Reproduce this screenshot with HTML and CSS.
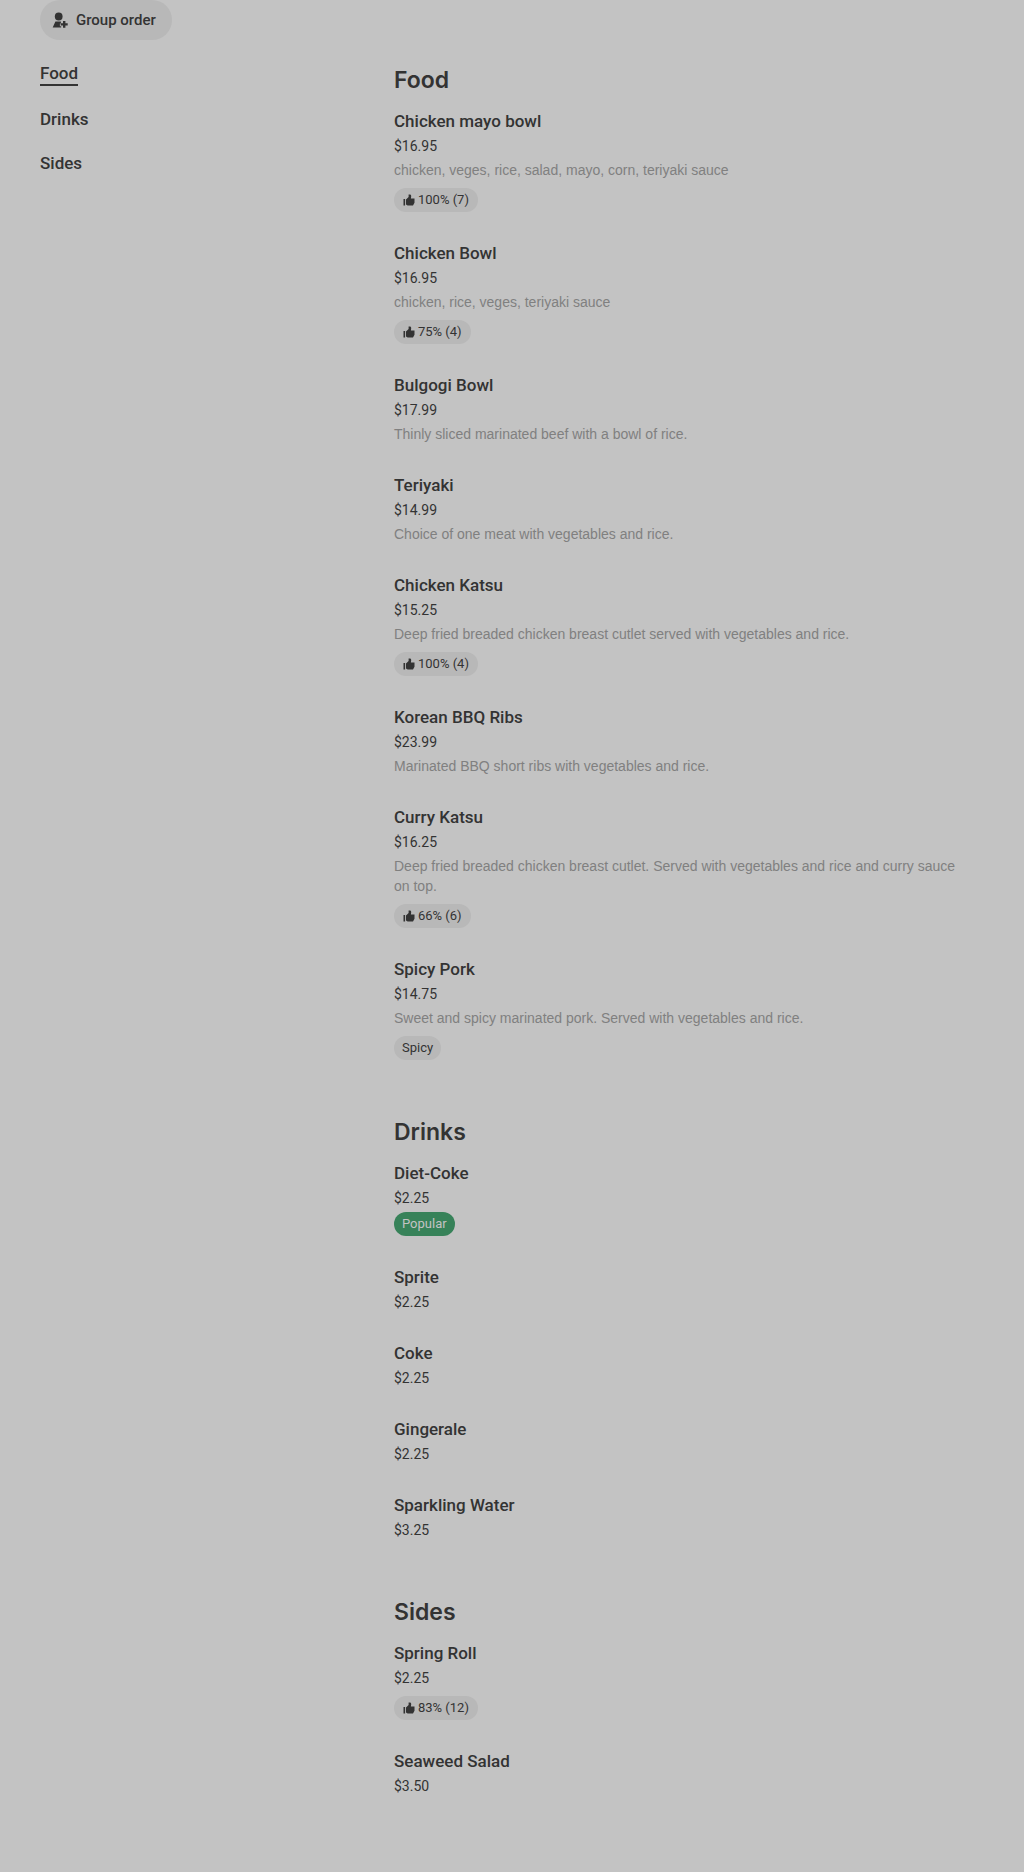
FILE: index.html
```html
<!DOCTYPE html>
<html lang="en">
<head>
    <meta charset="UTF-8">
    <meta name="viewport" content="width=device-width, initial-scale=1.0">
    <title>Menu</title>
    <link rel="stylesheet" href="styles.css">
</head>
<body>
    <svg class="sprite" aria-hidden="true">
        <symbol id="thumb" viewBox="0 0 12 12">
            <path d="M0.5 5h1.6v6.5H0.5zM3 5.6L5.6 3V0.6h1.1c1 0 1.5 0.7 1.5 1.6L7.9 4.4h3.6v4.4L10 11.5H4.6L3 10.6z"/>
        </symbol>
    </svg>

    <div class="toolbar">
        <button class="group-btn" type="button">
            <svg class="group-icon" viewBox="0 0 16 16" aria-hidden="true">
                <circle cx="6.7" cy="4.5" r="3.9"/>
                <path d="M3.4 9.4h5.5v2.2h-1v2.7h1.3v1.2H0.7z"/>
                <path d="M11 8.9h2.4v2.3h2.3v2.3h-2.3v2.3H11v-2.3H8.7v-2.3H11z"/>
            </svg>
            Group order
        </button>
    </div>

    <div class="layout">
        <nav class="menu-nav">
            <a class="active" href="#food">Food</a>
            <a href="#drinks">Drinks</a>
            <a href="#sides">Sides</a>
        </nav>

        <main class="menu">
            <section id="food">
                <h2>Food</h2>
                <ul>
                    <li class="item">
                        <h3>Chicken mayo bowl</h3>
                        <p class="price">$16.95</p>
                        <p class="desc">chicken, veges, rice, salad, mayo, corn, teriyaki sauce</p>
                        <span class="tag rating"><svg><use href="#thumb"/></svg>100% (7)</span>
                    </li>
                    <li class="item">
                        <h3>Chicken Bowl</h3>
                        <p class="price">$16.95</p>
                        <p class="desc">chicken, rice, veges, teriyaki sauce</p>
                        <span class="tag rating"><svg><use href="#thumb"/></svg>75% (4)</span>
                    </li>
                    <li class="item">
                        <h3>Bulgogi Bowl</h3>
                        <p class="price">$17.99</p>
                        <p class="desc">Thinly sliced marinated beef with a bowl of rice.</p>
                    </li>
                    <li class="item">
                        <h3>Teriyaki</h3>
                        <p class="price">$14.99</p>
                        <p class="desc">Choice of one meat with vegetables and rice.</p>
                    </li>
                    <li class="item">
                        <h3>Chicken Katsu</h3>
                        <p class="price">$15.25</p>
                        <p class="desc">Deep fried breaded chicken breast cutlet served with vegetables and rice.</p>
                        <span class="tag rating"><svg><use href="#thumb"/></svg>100% (4)</span>
                    </li>
                    <li class="item">
                        <h3>Korean BBQ Ribs</h3>
                        <p class="price">$23.99</p>
                        <p class="desc">Marinated BBQ short ribs with vegetables and rice.</p>
                    </li>
                    <li class="item">
                        <h3>Curry Katsu</h3>
                        <p class="price">$16.25</p>
                        <p class="desc">Deep fried breaded chicken breast cutlet. Served with vegetables and rice and curry sauce on top.</p>
                        <span class="tag rating"><svg><use href="#thumb"/></svg>66% (6)</span>
                    </li>
                    <li class="item">
                        <h3>Spicy Pork</h3>
                        <p class="price">$14.75</p>
                        <p class="desc">Sweet and spicy marinated pork. Served with vegetables and rice.</p>
                        <span class="tag">Spicy</span>
                    </li>
                </ul>
            </section>

            <section id="drinks">
                <h2>Drinks</h2>
                <ul>
                    <li class="item">
                        <h3>Diet-Coke</h3>
                        <p class="price">$2.25</p>
                        <span class="tag popular">Popular</span>
                    </li>
                    <li class="item">
                        <h3>Sprite</h3>
                        <p class="price">$2.25</p>
                    </li>
                    <li class="item">
                        <h3>Coke</h3>
                        <p class="price">$2.25</p>
                    </li>
                    <li class="item">
                        <h3>Gingerale</h3>
                        <p class="price">$2.25</p>
                    </li>
                    <li class="item">
                        <h3>Sparkling Water</h3>
                        <p class="price">$3.25</p>
                    </li>
                </ul>
            </section>

            <section id="sides">
                <h2>Sides</h2>
                <ul>
                    <li class="item">
                        <h3>Spring Roll</h3>
                        <p class="price">$2.25</p>
                        <span class="tag rating"><svg><use href="#thumb"/></svg>83% (12)</span>
                    </li>
                    <li class="item">
                        <h3>Seaweed Salad</h3>
                        <p class="price">$3.50</p>
                    </li>
                </ul>
            </section>
        </main>
    </div>
</body>
</html>
```
FILE: styles.css
```css
* {
    margin: 0;
    padding: 0;
    box-sizing: border-box;
}

body {
    font-family: Roboto, "Liberation Sans", sans-serif;
    font-size: 14px;
    line-height: 20px;
    background-color: #c3c3c3;
    color: #333;
}

ul {
    list-style: none;
}

.sprite {
    display: none;
}

.toolbar {
    padding: 0 40px;
}

.group-btn {
    display: flex;
    align-items: center;
    gap: 8px;
    height: 40px;
    padding: 0 16px 0 12px;
    border: none;
    border-radius: 20px;
    background-color: #b8b8b8;
    color: #333;
    font-family: inherit;
    font-size: 15px;
    font-weight: 500;
    cursor: pointer;
}

.group-icon {
    width: 16px;
    height: 16px;
    fill: #333;
}

.layout {
    display: grid;
    grid-template-columns: 3fr 5fr;
    padding: 20px 40px;
}

.menu-nav {
    display: flex;
    flex-direction: column;
    align-items: flex-start;
    gap: 20px;
}

.menu-nav a {
    padding: 3px 0 1px;
    color: #333;
    font-size: 17px;
    font-weight: 500;
    line-height: 20px;
    text-decoration: none;
}

.menu-nav .active {
    border-bottom: 2px solid #333;
}

.menu section {
    padding-bottom: 24px;
}

.menu h2 {
    margin-bottom: 12px;
    padding-top: 4px;
    font-family: Inter, Roboto, sans-serif;
    font-size: 23px;
    font-weight: 600;
    line-height: 32px;
}

.item {
    display: flex;
    flex-direction: column;
    align-items: flex-start;
    padding-bottom: 28px;
}

.item h3 {
    margin-bottom: 2px;
    font-size: 17px;
    font-weight: 500;
    line-height: 26px;
}

.desc {
    margin-top: 4px;
    padding-right: 16px;
    color: #808080;
    font-family: "Liberation Sans", Arial, sans-serif;
}

.tag {
    display: flex;
    align-items: center;
    gap: 3px;
    height: 24px;
    margin-top: 8px;
    padding: 0 8px;
    border-radius: 12px;
    background-color: #b8b8b8;
    font-size: 13px;
}

.tag svg {
    width: 12px;
    height: 12px;
    fill: #333;
}

.rating {
    padding: 0 9px;
}

.popular {
    margin-top: 4px;
    background-color: #378259;
    color: #c3c3c3;
}
```
